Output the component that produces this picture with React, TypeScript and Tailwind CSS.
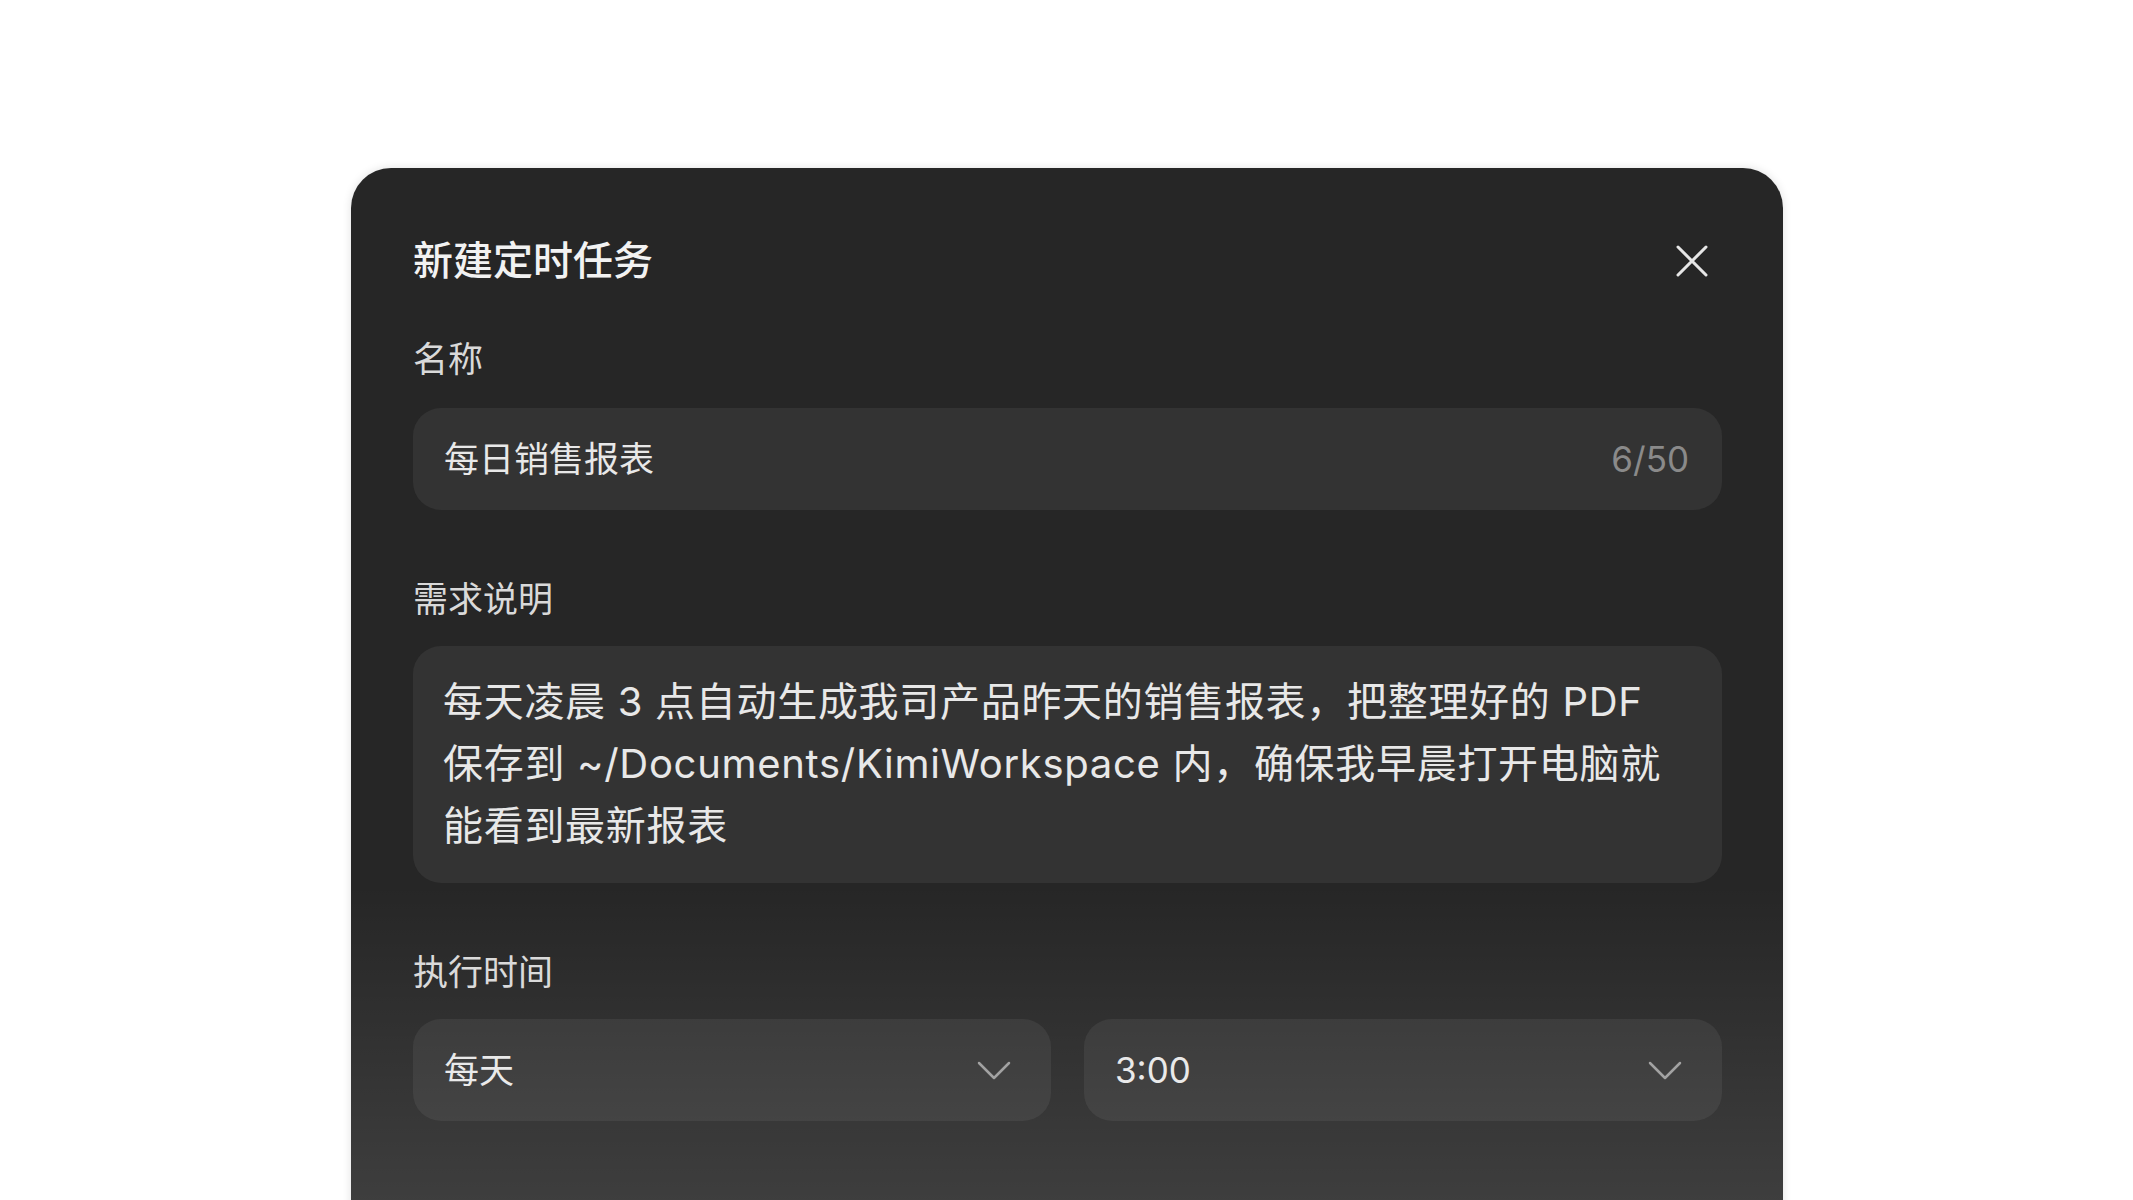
import React from "react";

const FONT = "font-['Inter','Noto_Sans_CJK_SC',sans-serif]";

function Label({ children }: { children: React.ReactNode }) {
  return <div className="h-[48px] text-[35px] leading-[48px] text-[#d9d9d9]">{children}</div>;
}

function Chevron() {
  return (
    <svg width="34" height="19" viewBox="0 0 34 19" fill="none" aria-hidden="true">
      <polyline points="2,2 17,17 32,2" stroke="#9c9c9c" strokeWidth="2.5" strokeLinecap="round" strokeLinejoin="round" />
    </svg>
  );
}

function SelectBox({ value }: { value: string }) {
  return (
    <div className="flex h-[102px] items-center justify-between rounded-[28px] bg-[#333333] pl-[31px] pr-[40px]">
      <span className="text-[35px] leading-[48px] text-[#e8e8e8]">{value}</span>
      <Chevron />
    </div>
  );
}

export default function App() {
  return (
    <div className={`h-[1200px] w-full overflow-hidden bg-white ${FONT}`}>
      <div className="relative ml-[351px] mt-[168px] min-h-[1100px] w-[1432px] rounded-[40px] bg-[#262626] pl-[62px] pr-[61px] pt-[65px] shadow-[0_0_10px_rgba(0,0,0,0.12)]">
        {/* header */}
        <div className="flex h-[56px] items-center justify-between">
          <h2 className="text-[40px] font-medium leading-[56px] text-[#f2f2f2]">新建定时任务</h2>
          <button className="flex h-[56px] w-[60px] items-center justify-center" aria-label="关闭">
            <svg width="32" height="32" viewBox="0 0 32 32" fill="none">
              <path d="M2 2L30 30M30 2L2 30" stroke="#e6e6e6" strokeWidth="3" strokeLinecap="round" />
            </svg>
          </button>
        </div>

        {/* name */}
        <div className="mt-[46px]">
          <Label>名称</Label>
        </div>
        <div className="mt-[25px] flex h-[102px] items-center justify-between rounded-[28px] bg-[#333333] pl-[31px] pr-[33px]">
          <span className="text-[35px] leading-[48px] text-[#e8e8e8]">每日销售报表</span>
          <span className="text-[35px] leading-[48px] text-[#8a8a8a]">6/50</span>
        </div>

        {/* description */}
        <div className="mt-[65px]">
          <Label>需求说明</Label>
        </div>
        <div className="mt-[23px] h-[237px] rounded-[28px] bg-[#333333] pl-[30px] pt-[25px] text-[40px] leading-[62px] tracking-[0.7px] text-[#e8e8e8]">
          <div className="whitespace-nowrap">每天凌晨 3 点自动生成我司产品昨天的销售报表，把整理好的 PDF</div>
          <div className="whitespace-nowrap">保存到 ~/Documents/KimiWorkspace 内，确保我早晨打开电脑就</div>
          <div className="whitespace-nowrap">能看到最新报表</div>
        </div>

        {/* schedule */}
        <div className="mt-[65px]">
          <Label>执行时间</Label>
        </div>
        <div className="mt-[23px] grid grid-cols-2 gap-[33px]">
          <SelectBox value="每天" />
          <SelectBox value="3:00" />
        </div>

        {/* fade toward bottom */}
        <div className="pointer-events-none absolute inset-x-0 top-[716px] h-[316px] bg-gradient-to-b from-transparent to-white/[0.11]" />
        <div className="pointer-events-none absolute inset-x-0 bottom-0 top-[1032px] rounded-b-[40px] bg-white/[0.11]" />
      </div>
    </div>
  );
}
